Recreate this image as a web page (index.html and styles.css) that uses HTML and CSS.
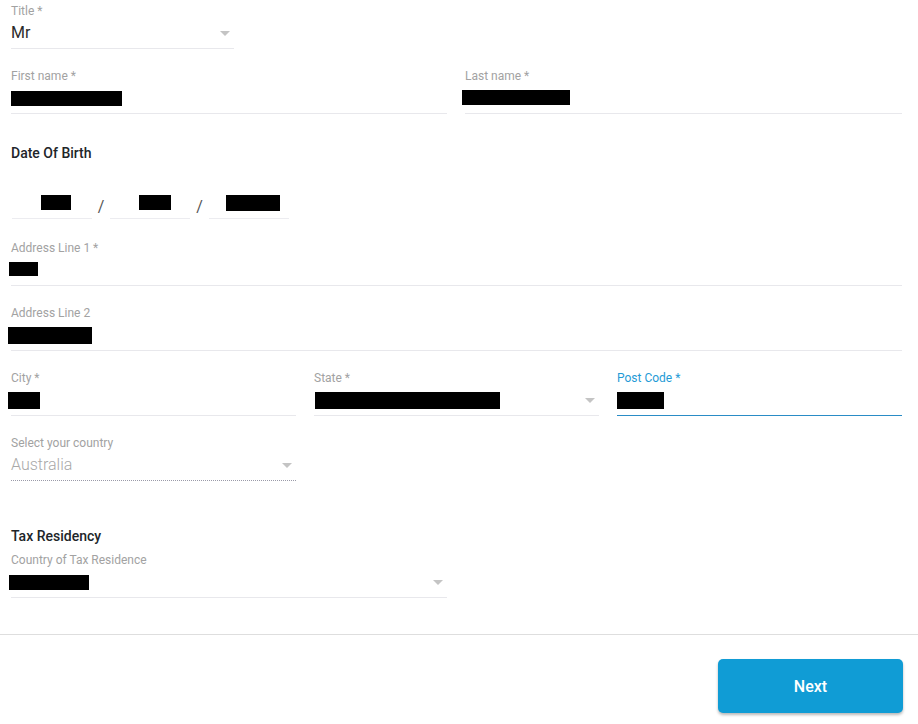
FILE: index.html
```html
<!DOCTYPE html>
<html>
<head>
<meta charset="utf-8">
<link rel="stylesheet" href="styles.css">
</head>
<body>
<form class="form">
  <div class="row">
    <div class="field w-title">
      <label class="label">Title *</label>
      <div class="input select"><span class="value">Mr</span><span class="arrow"></span></div>
    </div>
  </div>

  <div class="row two">
    <div class="field">
      <label class="label">First name *</label>
      <div class="input"><span class="redact r-first"></span></div>
    </div>
    <div class="field">
      <label class="label">Last name *</label>
      <div class="input"><span class="redact r-last"></span></div>
    </div>
  </div>

  <h3 class="heading dob-heading">Date Of Birth</h3>
  <div class="dob">
    <div class="field dob-field">
      <label class="label">&nbsp;</label>
      <div class="input"><span class="redact r-day"></span></div>
    </div>
    <span class="slash">/</span>
    <div class="field dob-field">
      <label class="label">&nbsp;</label>
      <div class="input"><span class="redact r-month"></span></div>
    </div>
    <span class="slash">/</span>
    <div class="field dob-field">
      <label class="label">&nbsp;</label>
      <div class="input"><span class="redact r-year"></span></div>
    </div>
  </div>

  <div class="row gap-top">
    <div class="field full">
      <label class="label">Address Line 1 *</label>
      <div class="input"><span class="redact r-addr1"></span></div>
    </div>
  </div>

  <div class="row">
    <div class="field full">
      <label class="label">Address Line 2</label>
      <div class="input"><span class="redact r-addr2"></span></div>
    </div>
  </div>

  <div class="row three">
    <div class="field">
      <label class="label">City *</label>
      <div class="input"><span class="redact r-city"></span></div>
    </div>
    <div class="field">
      <label class="label">State *</label>
      <div class="input select"><span class="redact r-state"></span><span class="arrow"></span></div>
    </div>
    <div class="field focused">
      <label class="label">Post Code *</label>
      <div class="input"><span class="redact r-post"></span></div>
    </div>
  </div>

  <div class="row">
    <div class="field w-country disabled">
      <label class="label">Select your country</label>
      <div class="input select"><span class="value">Australia</span><span class="arrow"></span></div>
    </div>
  </div>

  <h3 class="heading tax-heading">Tax Residency</h3>
  <div class="row tight">
    <div class="field w-tax">
      <label class="label">Country of Tax Residence</label>
      <div class="input select"><span class="redact r-tax"></span><span class="arrow"></span></div>
    </div>
  </div>
</form>

<footer class="footer">
  <button type="button" class="btn-next">Next</button>
</footer>
</body>
</html>
```

FILE: styles.css
```css
* { box-sizing: border-box; }

html, body {
  margin: 0;
  padding: 0;
  background: #ffffff;
  font-family: Roboto, "Liberation Sans", Arial, sans-serif;
  color: #333333;
}

.form {
  padding: 3px 16px 0 11px;
}

.row {
  display: flex;
  margin-bottom: 19px;
}

.row.two {
  display: grid;
  grid-template-columns: 436px 437px;
  column-gap: 18px;
  margin-bottom: 0;
}

.row.three {
  display: grid;
  grid-template-columns: 285px 285px 285px;
  column-gap: 18px;
}

.row.gap-top { margin-top: 21px; }
.row.tight { margin-bottom: 0; }

.field {
  display: flex;
  flex-direction: column;
}

.w-title { width: 223px; }
.w-country { width: 285px; }
.w-tax { width: 436px; }
.full { width: 891px; }

.label {
  font-size: 12px;
  line-height: 14px;
  height: 15px;
  padding-top: 1px;
  color: #a2a2a2;
  white-space: nowrap;
}

.input {
  height: 31px;
  padding: 4px 0 5px 0;
  border-bottom: 1px solid #e8e8ec;
  display: flex;
  align-items: center;
  font-size: 16px;
  line-height: 22px;
  color: #2b2b2b;
}

.select {
  justify-content: space-between;
}

.arrow {
  width: 0;
  height: 0;
  border-left: 5px solid transparent;
  border-right: 5px solid transparent;
  border-top: 5px solid #c4c4c4;
  margin-right: 4px;
  margin-top: 1px;
}

.value { padding-left: 0; }

.disabled .value { color: #a8a8a8; font-weight: 300; }
.disabled .input {
  border-bottom: 1px dotted #9a9aa8;
}

.focused .label { color: #1f9bd6; }
.focused .input { border-bottom: 1px solid #2a8cc6; }

.redact {
  display: inline-block;
  background: #000000;
  height: 15px;
}

.r-first { width: 111px; margin-top: 1px; }
.r-last { width: 108px; margin-left: -3px; }
.r-day { width: 30px; margin-left: 29px; }
.r-month { width: 32px; margin-left: 29px; }
.r-year { width: 54px; margin-left: 17px; height: 16px; }
.r-addr1 { width: 29px; margin-left: -2px; height: 14px; margin-top: -2px; }
.r-addr2 { width: 84px; margin-left: -3px; height: 17px; margin-top: 2px; }
.r-city { width: 32px; margin-left: -3px; height: 17px; margin-top: 2px; }
.r-state { width: 185px; margin-left: 1px; height: 17px; margin-top: 2px; }
.r-post { width: 47px; height: 17px; margin-top: 2px; }
.r-tax { width: 80px; margin-left: -2px; margin-top: 2px; }

.heading {
  margin: 0;
  font-size: 14px;
  line-height: 20px;
  font-weight: 500;
  color: #212529;
}

.dob-heading {
  margin-top: 29px;
  margin-bottom: 10px;
}

.tax-heading {
  margin-top: 45px;
  margin-bottom: 6px;
}

.dob {
  display: flex;
  align-items: flex-end;
  padding-left: 1px;
}

.dob-field { width: 80px; }

.dob-field .input { border-bottom-color: #ececf0; }

.slash {
  width: 18px;
  text-align: center;
  font-size: 16px;
  line-height: 22px;
  color: #555555;
  margin-bottom: 1px;
}

.dob .slash:nth-of-type(2) { width: 19px; }

.footer {
  margin-top: 36px;
  border-top: 1px solid #dedede;
  display: flex;
  justify-content: flex-end;
  padding: 24px 15px 11px 0;
}

.btn-next {
  width: 185px;
  height: 54px;
  border: none;
  border-radius: 5px;
  background: #109cd5;
  color: #ffffff;
  font-family: Roboto, "Liberation Sans", Arial, sans-serif;
  font-size: 16px;
  font-weight: 500;
  box-shadow: 0 2px 3px rgba(0, 0, 0, 0.28);
  cursor: pointer;
}
```
